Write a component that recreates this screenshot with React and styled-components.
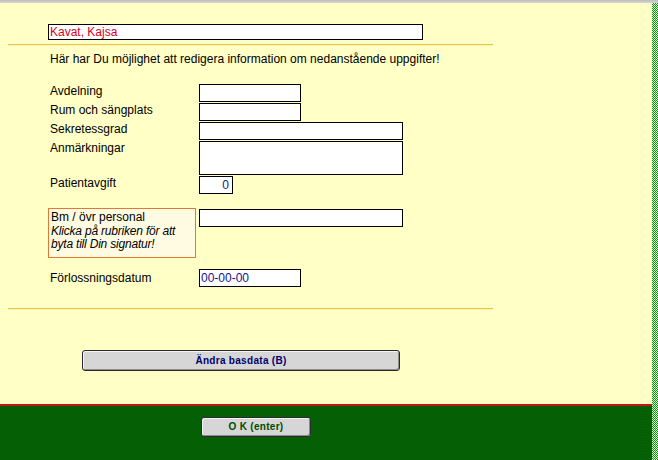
import React from "react";
import styled, { createGlobalStyle } from "styled-components";

const Global = createGlobalStyle`
  html, body { margin: 0; padding: 0; overflow: hidden; }
  body { font-family: "Liberation Sans", Arial, sans-serif; }
  * { box-sizing: border-box; }
`;

const Page = styled.div`
  width: 658px;
  height: 460px;
  display: flex;
  flex-direction: column;
  background: #ffffc6;
`;

const TopBar = styled.div`
  height: 3px;
  background: linear-gradient(#bdbdbd, #d6d6d6);
  flex: none;
`;

const Body = styled.div`
  flex: 1;
  display: flex;
  min-height: 0;
`;

const Main = styled.div`
  flex: 1;
  display: flex;
  flex-direction: column;
`;

const CheckerStrip = styled.div`
  width: 6px;
  flex: none;
  background-color: #e4ffe0;
  background-image: conic-gradient(#00a000 25%, transparent 0 50%, #00a000 0 75%, transparent 0);
  background-size: 2px 2px;
`;

const Content = styled.div`
  height: 401px;
  padding-top: 21px;
  display: flex;
  flex-direction: column;
  background: #ffffc6;
`;

const NameField = styled.input`
  margin-left: 48px;
  width: 375px;
  height: 16px;
  border: 1px solid #000;
  background: #fff;
  color: #dc0020;
  font: 12px/14px "Liberation Sans", Arial, sans-serif;
  padding: 0 1px;
  outline: none;
`;

const Divider = styled.div`
  margin-left: 8px;
  width: 485px;
  height: 1px;
  background: #e6c24a;
  box-shadow: 0 1px 0 #fff4b0;
  margin-top: ${(p) => p.$top}px;
`;

const Intro = styled.p`
  margin: 7px 0 0 50px;
  font-size: 12px;
  line-height: 14px;
  color: #000;
`;

const Form = styled.div`
  display: flex;
  flex-direction: column;
  gap: 1px;
  margin-top: 18px;
  padding-left: 48px;
`;

const FieldRow = styled.div`
  display: flex;
  align-items: flex-start;
  margin-top: ${(p) => p.$top || 0}px;
`;

const Label = styled.div`
  width: 151px;
  padding-left: 2px;
  padding-top: ${(p) => p.$pad ?? 0}px;
  font-size: 12px;
  line-height: 14px;
  color: #000;
`;

const Field = styled.input`
  width: ${(p) => p.$w}px;
  height: ${(p) => p.$h || 18}px;
  border: 1px solid #000;
  background: #fff;
  color: #14148c;
  font: 12px/14px "Liberation Sans", Arial, sans-serif;
  padding: 0 ${(p) => (p.$right ? 3 : 1)}px 0 1px;
  text-align: ${(p) => (p.$right ? "right" : "left")};
  margin-top: ${(p) => p.$top || 0}px;
  outline: none;
`;

const Area = styled.textarea`
  width: 204px;
  height: 34px;
  border: 1px solid #000;
  background: #fff;
  resize: none;
  padding: 1px;
  font: 12px/14px "Liberation Sans", Arial, sans-serif;
  outline: none;
  overflow: hidden;
`;

const SignatureBox = styled.div`
  width: 148px;
  height: 50px;
  margin-right: 3px;
  border: 1px solid #e07a30;
  background: #fffbe2;
  padding: 1px 2px 0 2px;
  color: #000;
`;

const SigTitle = styled.div`
  font-size: 12px;
  line-height: 14px;
`;

const Hint = styled.div`
  font-size: 12px;
  line-height: 13px;
  font-style: italic;
  margin-top: 1px;
  letter-spacing: -0.2px;
`;

const ButtonRow = styled.div`
  margin-top: ${(p) => p.$top}px;
  padding-left: ${(p) => p.$left}px;
  display: flex;
`;

const ActionButton = styled.button`
  width: ${(p) => p.$w}px;
  height: ${(p) => p.$h}px;
  background: #d6d6d6;
  border: 1px solid #2a2a2a;
  border-radius: 3px;
  box-shadow: inset 1px 1px 0 #f4f4f4, inset -1px -1px 0 #8c8c8c;
  color: ${(p) => p.$color};
  font: bold 10px/12px "Liberation Sans", Arial, sans-serif;
  letter-spacing: 0.3px;
  padding: 0;
  cursor: pointer;
`;

const Footer = styled.div`
  flex: 1;
  background: #056005;
  border-top: 2px solid #c81414;
  padding-top: 11px;
  padding-left: 201px;
  display: flex;
  align-items: flex-start;
`;

export default function App() {
  return (
    <>
      <Global />
      <Page>
        <TopBar />
        <Body>
          <Main>
            <Content>
              <NameField defaultValue="Kavat, Kajsa" />
              <Divider $top={4} />
              <Intro>Här har Du möjlighet att redigera information om nedanstående uppgifter!</Intro>
              <Form>
                <FieldRow>
                  <Label>Avdelning</Label>
                  <Field $w={102} />
                </FieldRow>
                <FieldRow>
                  <Label>Rum och sängplats</Label>
                  <Field $w={102} />
                </FieldRow>
                <FieldRow>
                  <Label>Sekretessgrad</Label>
                  <Field $w={204} />
                </FieldRow>
                <FieldRow>
                  <Label>Anmärkningar</Label>
                  <Area />
                </FieldRow>
                <FieldRow>
                  <Label>Patientavgift</Label>
                  <Field $w={34} $right defaultValue="0" />
                </FieldRow>
                <FieldRow $top={13}>
                  <SignatureBox>
                    <SigTitle>Bm / övr personal</SigTitle>
                    <Hint>
                      Klicka på rubriken för att
                      <br />
                      byta till Din signatur!
                    </Hint>
                  </SignatureBox>
                  <Field $w={204} $top={1} />
                </FieldRow>
                <FieldRow $top={10}>
                  <Label $pad={2}>Förlossningsdatum</Label>
                  <Field $w={102} defaultValue="00-00-00" />
                </FieldRow>
              </Form>
              <Divider $top={21} />
              <ButtonRow $top={41} $left={82}>
                <ActionButton $w={318} $h={21} $color="#00006e">
                  Ändra basdata (B)
                </ActionButton>
              </ButtonRow>
            </Content>
            <Footer>
              <ActionButton $w={110} $h={20} $color="#004a00">
                O K (enter)
              </ActionButton>
            </Footer>
          </Main>
          <CheckerStrip />
        </Body>
      </Page>
    </>
  );
}
